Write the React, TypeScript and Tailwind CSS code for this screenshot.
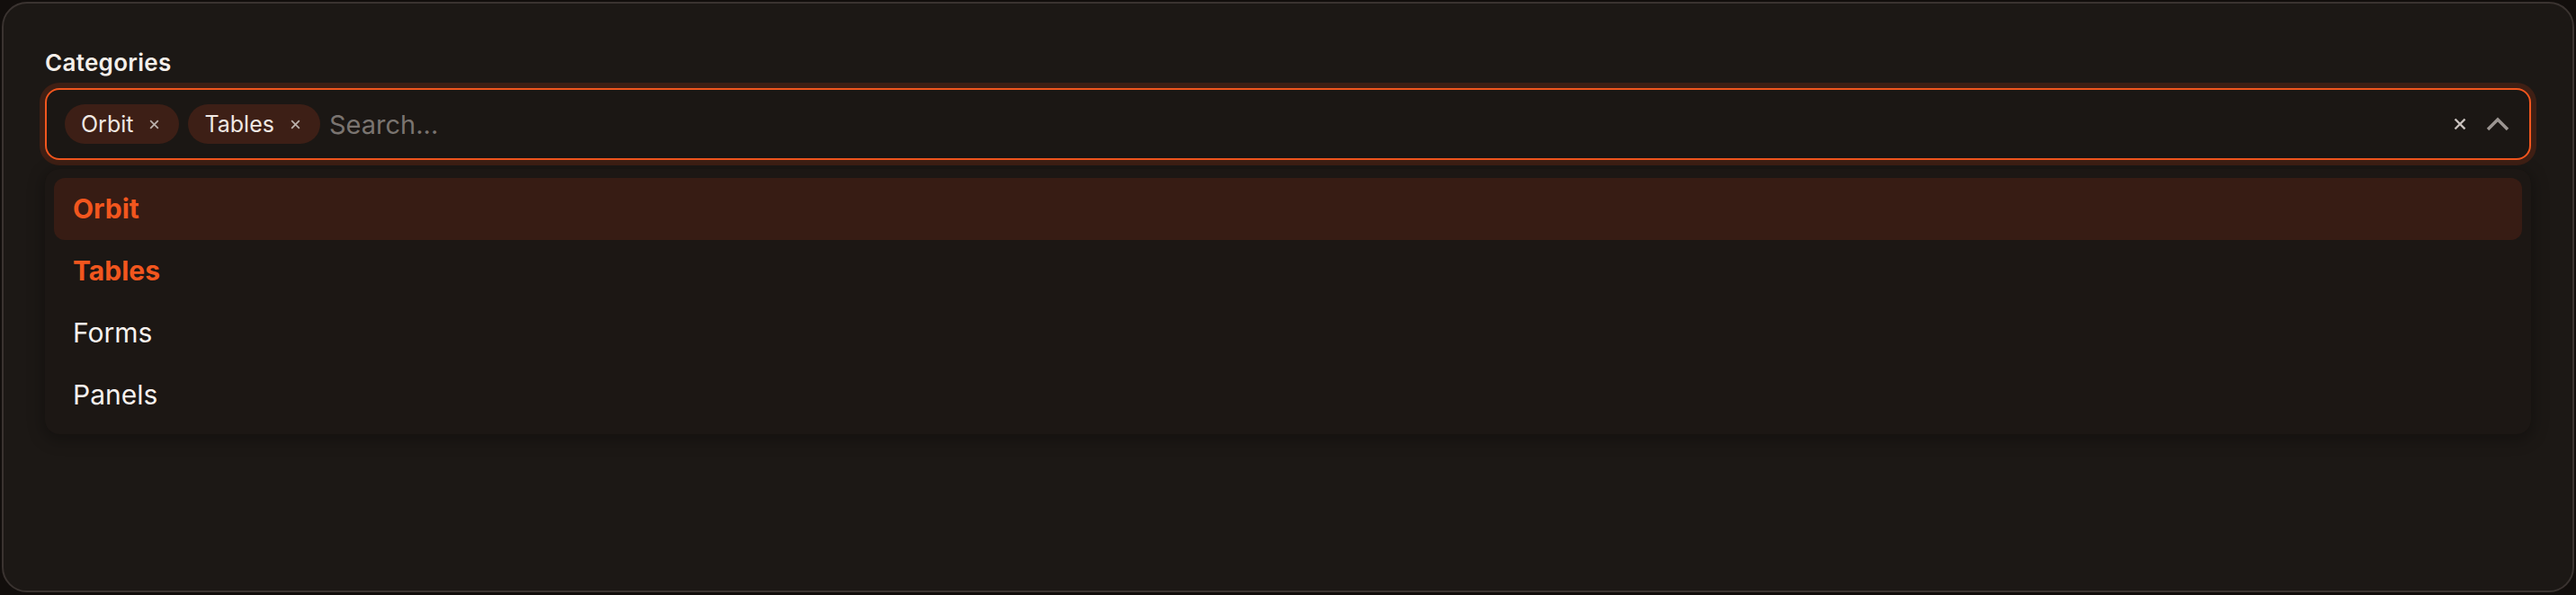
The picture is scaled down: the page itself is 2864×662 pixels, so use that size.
import React from "react";

const XIcon = ({ className }: { className?: string }) => (
  <svg viewBox="0 0 12 12" className={className} fill="none" stroke="currentColor" strokeWidth="2" strokeLinecap="square">
    <path d="M2 2 L10 10 M10 2 L2 10" />
  </svg>
);

const Chip = ({ label }: { label: string }) => (
  <div className="flex h-[44px] items-center rounded-full bg-[#3d1f16] pl-[18px] pr-[22px]">
    <span className="text-[25px] leading-none text-[#f0e8e3]">{label}</span>
    <XIcon className="ml-[18px] h-[11px] w-[11px] text-[#b9afaa]" />
  </div>
);

export default function App() {
  const items = [
    { label: "Orbit", selected: true, active: true },
    { label: "Tables", selected: true, active: false },
    { label: "Forms", selected: false, active: false },
    { label: "Panels", selected: false, active: false },
  ];
  return (
    <div className="h-[662px] w-[2864px] bg-[#120e0c] p-[2px] font-['Inter',sans-serif]">
      <div className="h-[657px] rounded-[28px] border-2 border-[#3a3330] bg-[#1c1815] px-[46px] pt-[50px]">
        <div className="mb-[12px] h-[32px] text-[26px] font-semibold leading-[32px] tracking-[0.3px] text-[#f4efea]">Categories</div>
        <div className="flex h-[80px] items-center rounded-[16px] border-2 border-[#f2561e] bg-[#1b1714] pl-[20px] pr-[22px] shadow-[0_0_0_6px_#3f1f14]">
          <div className="flex flex-1 items-center gap-[10px]">
            <Chip label="Orbit" />
            <Chip label="Tables" />
            <span className="text-[29px] leading-none text-[#7a7470]">Search...</span>
          </div>
          <XIcon className="h-[14px] w-[14px] text-[#c9c2be]" />
          <svg viewBox="0 0 26 16" className="ml-[22px] h-[16px] w-[26px] text-[#9b9591]" fill="none" stroke="currentColor" strokeWidth="3.5">
            <path d="M2 14 L13 3 L24 14" />
          </svg>
        </div>
        <div className="mt-[10px] rounded-[16px] bg-[#1c1714] px-[10px] pt-[10px] pb-[9px] shadow-[0_4px_16px_4px_rgba(0,0,0,0.25)]">
          {items.map((it) => (
            <div
              key={it.label}
              className={`flex h-[69px] items-center rounded-[12px] px-[21px] text-[30px] ${
                it.active ? "bg-[#371c14]" : ""
              } ${it.selected ? "font-bold text-[#f2561e]" : "text-[#f6f1ee]"}`}
            >
              {it.label}
            </div>
          ))}
        </div>
      </div>
    </div>
  );
}
